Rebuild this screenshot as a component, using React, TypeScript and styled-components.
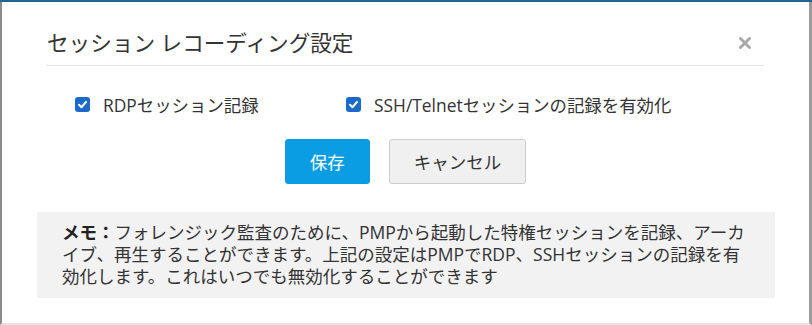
import styled, { createGlobalStyle } from 'styled-components';

const GlobalStyle = createGlobalStyle`
  html, body {
    margin: 0;
    padding: 0;
    background: #ffffff;
  }
  body {
    font-family: "Open Sans", "Noto Sans CJK JP", sans-serif;
    color: #333333;
  }
`;

const CheckIcon = () => (
  <svg width="11" height="11" viewBox="0 0 12 12">
    <path d="M2.2 6.3 L4.9 9 L9.9 3.2" fill="none" stroke="#ffffff" strokeWidth="2.2" strokeLinecap="round" strokeLinejoin="round" />
  </svg>
);

const CloseIcon = () => (
  <svg width="12" height="12" viewBox="0 0 12 12">
    <path d="M1.5 1.5 L10.5 10.5 M10.5 1.5 L1.5 10.5" stroke="#a8a8a8" strokeWidth="2.8" strokeLinecap="square" />
  </svg>
);

const App = () => {
  return (
    <>
      <GlobalStyle />
      <Frame>
        <Modal>
          <Header>
            <Title>セッション レコーディング設定</Title>
            <CloseButton aria-label="close">
              <CloseIcon />
            </CloseButton>
          </Header>

          <Options>
            <Option>
              <Box>
                <CheckIcon />
              </Box>
              <Label>RDPセッション記録</Label>
            </Option>
            <Option>
              <Box>
                <CheckIcon />
              </Box>
              <Label>SSH/Telnetセッションの記録を有効化</Label>
            </Option>
          </Options>

          <Actions>
            <Button $primary>保存</Button>
            <Button>キャンセル</Button>
          </Actions>

          <Note>
            <strong>メモ：</strong>フォレンジック監査のために、PMPから起動した特権セッションを記録、アーカ
            <br />
            イブ、再生することができます。上記の設定はPMPでRDP、SSHセッションの記録を有
            <br />
            効化します。これはいつでも無効化することができます
          </Note>
        </Modal>
      </Frame>
    </>
  );
};

export default App;

// Styled Components
const Frame = styled.div`
  width: 812px;
  height: 325px;
  box-sizing: border-box;
  border-top: 2px solid #25648f;
  background: #ffffff;
  overflow: hidden;
`;

const Modal = styled.div`
  height: 323px;
  box-sizing: border-box;
  border-left: 2px solid #8c8c8c;
  border-right: 3px solid #9c9c9c;
  border-bottom: 2px solid #e4e4e4;
  display: flex;
  flex-direction: column;
`;

const Header = styled.div`
  margin: 0 45px 0 44px;
  padding: 26px 0 7px;
  display: flex;
  justify-content: space-between;
  align-items: center;
  border-bottom: 1px solid #e5e5e5;
`;

const Title = styled.h2`
  margin: 0 0 0 1px;
  font-size: 21.6px;
  font-weight: 400;
  line-height: 30px;
  color: #333333;
`;

const CloseButton = styled.button`
  width: 12px;
  height: 12px;
  margin-right: 13px;
  padding: 0;
  border: none;
  background: none;
  display: flex;
  cursor: pointer;
`;

const Options = styled.div`
  margin-top: 26px;
  padding-left: 73px;
  display: grid;
  grid-template-columns: 271px auto;
  align-items: center;
`;

const Option = styled.label`
  display: flex;
  align-items: center;
  gap: 13px;
  height: 24px;
`;

const Box = styled.span`
  width: 15px;
  height: 15px;
  border-radius: 3px;
  background: #1b6acb;
  display: flex;
  align-items: center;
  justify-content: center;
  flex-shrink: 0;
`;

const Label = styled.span`
  font-size: 17.4px;
  color: #333333;
  white-space: nowrap;
`;

const Actions = styled.div`
  margin-top: 23px;
  display: flex;
  justify-content: center;
  gap: 19px;
`;

const Button = styled.button<{ $primary?: boolean }>`
  height: 45px;
  padding: 0 24px;
  min-width: 85px;
  box-sizing: border-box;
  border-radius: 3px;
  border: 1px solid ${(p) => (p.$primary ? '#0a9be2' : '#cccccc')};
  background: ${(p) => (p.$primary ? '#0a9de3' : '#f0f0f0')};
  color: ${(p) => (p.$primary ? '#ffffff' : '#333333')};
  font-family: "Open Sans", "Noto Sans CJK JP", sans-serif;
  font-size: 17.5px;
  cursor: pointer;
`;

const Note = styled.div`
  margin: 28px 34px 0 35px;
  padding: 9px 25px 11px;
  background: #f2f2f2;
  font-size: 17.5px;
  line-height: 22px;
  color: #333333;
  white-space: nowrap;

  strong {
    font-weight: 700;
    color: #222222;
  }
`;
